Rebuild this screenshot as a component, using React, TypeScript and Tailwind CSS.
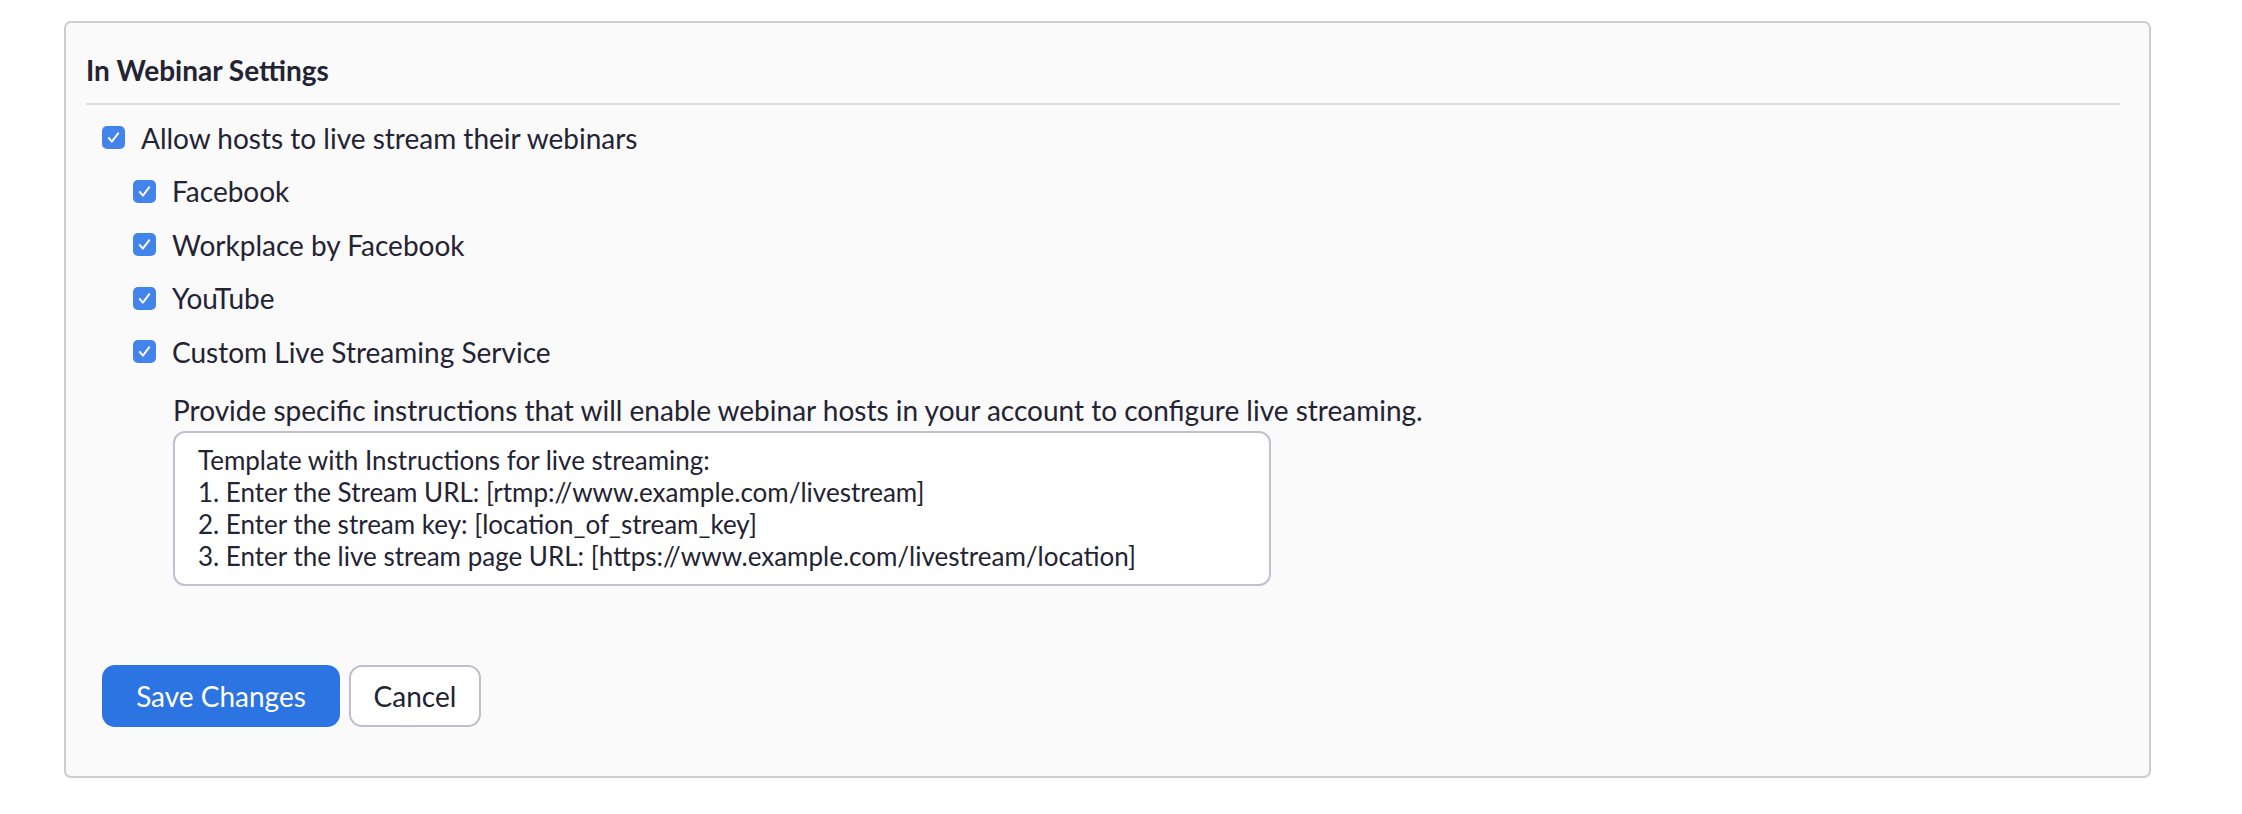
import React from "react";

const font = { fontFamily: "Lato, 'Open Sans', sans-serif" };

function Check() {
  return (
    <span className="flex h-[23px] w-[23px] shrink-0 items-center justify-center rounded-[5px] bg-[#4384ea]">
      <svg viewBox="0 0 24 24" className="h-[23px] w-[23px]" fill="none">
        <path d="M7 12.5 L10.3 16.3 L17 7.5" stroke="white" strokeWidth="2" strokeLinecap="round" strokeLinejoin="round" />
      </svg>
    </span>
  );
}

function Row({ label, indent }: { label: string; indent?: boolean }) {
  return (
    <div className={`flex h-[53.5px] items-center ${indent ? "pl-[47px]" : "pl-[16px]"}`}>
      <Check />
      <span className="ml-[16px] text-[28px] text-[#232333]">{label}</span>
    </div>
  );
}

const template = `Template with Instructions for live streaming:
1. Enter the Stream URL: [rtmp://www.example.com/livestream]
2. Enter the stream key: [location_of_stream_key]
3. Enter the live stream page URL: [https://www.example.com/livestream/location]`;

export default function App() {
  return (
    <div className="min-h-[814px] bg-white pl-[64px] pt-[21px]" style={font}>
      <div className="w-[2087px] rounded-[7px] border-2 border-[#cdcdcd] bg-[#fafafa] pb-[49px] pl-[20px] pr-[29px]">
        <h2 className="pt-[30px] text-[28px] font-bold leading-[34px] text-[#232333]">In Webinar Settings</h2>
        <div className="mt-[16px] h-[2px] bg-[#dcdcdc]" />

        <div className="mt-[6px]">
          <Row label="Allow hosts to live stream their webinars" />
          <Row label="Facebook" indent />
          <Row label="Workplace by Facebook" indent />
          <Row label="YouTube" indent />
          <Row label="Custom Live Streaming Service" indent />
        </div>

        <div className="pl-[87px]">
          <p className="mt-[13px] text-[28px] leading-[36px] text-[#232333]">
            Provide specific instructions that will enable webinar hosts in your account to configure live streaming.
          </p>
          <textarea
            readOnly
            defaultValue={template}
            className="mt-[3px] block h-[155px] w-[1098px] resize-none rounded-[12px] border-2 border-[#c1bfd1] bg-white pl-[23px] pt-[11px] text-[26px] leading-[32px] text-[#232333] outline-none"
            style={font}
          />
        </div>

        <div className="mt-[79px] flex gap-[9px] pl-[16px]">
          <button className="h-[62px] w-[238px] rounded-[13px] bg-[#2d74e3] text-[28px] text-white">Save Changes</button>
          <button className="h-[62px] w-[132px] rounded-[13px] border-2 border-[#bfbdd0] bg-white text-[28px] text-[#232333]">Cancel</button>
        </div>
      </div>
    </div>
  );
}
